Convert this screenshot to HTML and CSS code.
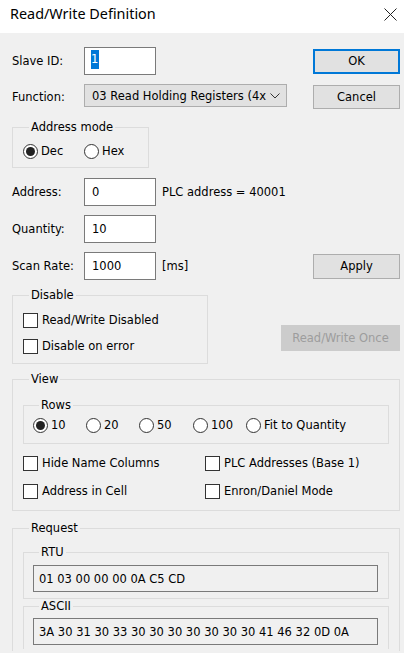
FILE: index.html
```html
<!DOCTYPE html>
<html>
<head>
<meta charset="utf-8">
<title>Read/Write Definition</title>
<link rel="stylesheet" href="styles.css">
</head>
<body>
<div class="titlebar">
  <div class="title">Read/Write Definition</div>
  <svg class="close" width="13" height="13" viewBox="0 0 13 13"><path d="M0.5 0.5 L12.5 12.5 M12.5 0.5 L0.5 12.5" stroke="#222" stroke-width="1" fill="none"/></svg>
</div>
<div class="content">
  <div class="row row-slave">
    <span class="lbl">Slave ID:</span>
    <div class="input"><span class="sel">1</span></div>
    <div class="btn btn-default">OK</div>
  </div>
  <div class="row row-func">
    <span class="lbl">Function:</span>
    <div class="select"><span>03 Read Holding Registers (4x</span><svg width="10" height="6" viewBox="0 0 10 6"><path d="M0.5 0.5 L5 5 L9.5 0.5" stroke="#333" stroke-width="1" fill="none"/></svg></div>
    <div class="btn btn-cancel">Cancel</div>
  </div>
  <fieldset class="group g-addr">
    <legend>Address mode</legend>
    <div class="opts">
      <label class="opt w61"><span class="radio on"></span>Dec</label>
      <label class="opt"><span class="radio"></span>Hex</label>
    </div>
  </fieldset>
  <div class="row row-field first">
    <span class="lbl">Address:</span>
    <div class="input">0</div>
    <span class="note">PLC address = 40001</span>
  </div>
  <div class="row row-field">
    <span class="lbl">Quantity:</span>
    <div class="input">10</div>
  </div>
  <div class="row row-field">
    <span class="lbl">Scan Rate:</span>
    <div class="input">1000</div>
    <span class="note">[ms]</span>
    <div class="btn btn-apply">Apply</div>
  </div>
  <div class="row row-disable">
    <fieldset class="group g-disable">
      <legend>Disable</legend>
      <label class="opt"><span class="check"></span>Read/Write Disabled</label>
      <label class="opt second"><span class="check"></span>Disable on error</label>
    </fieldset>
    <div class="btn btn-disabled">Read/Write Once</div>
  </div>
  <fieldset class="group g-view">
    <legend>View</legend>
    <fieldset class="group g-rows">
      <legend>Rows</legend>
      <div class="opts">
        <label class="opt w53"><span class="radio on"></span>10</label>
        <label class="opt w53"><span class="radio"></span>20</label>
        <label class="opt w54"><span class="radio"></span>50</label>
        <label class="opt w53"><span class="radio"></span>100</label>
        <label class="opt"><span class="radio"></span>Fit to Quantity</label>
      </div>
    </fieldset>
    <div class="checks">
      <label class="opt"><span class="check"></span>Hide Name Columns</label>
      <label class="opt"><span class="check"></span>PLC Addresses (Base 1)</label>
      <label class="opt"><span class="check"></span>Address in Cell</label>
      <label class="opt"><span class="check"></span>Enron/Daniel Mode</label>
    </div>
  </fieldset>
  <fieldset class="group g-request">
    <legend>Request</legend>
    <fieldset class="group g-sub g-rtu">
      <legend>RTU</legend>
      <div class="readout">01 03 00 00 00 0A C5 CD</div>
    </fieldset>
    <fieldset class="group g-sub g-ascii">
      <legend>ASCII</legend>
      <div class="readout">3A 30 31 30 33 30 30 30 30 30 30 30 41 46 32 0D 0A</div>
    </fieldset>
  </fieldset>
</div>
</body>
</html>
```
FILE: styles.css
```css
html, body {
  margin: 0;
  padding: 0;
}
body {
  width: 404px;
  height: 653px;
  overflow: hidden;
  background: #f0f0f0;
  font-family: "DejaVu Sans", sans-serif;
  font-size: 11.5px;
  color: #000;
}
.titlebar {
  height: 33px;
  background: #fff;
  display: flex;
  justify-content: space-between;
  align-items: flex-start;
  padding: 0 7px 0 10px;
  box-sizing: border-box;
}
.title {
  font-family: "Noto Sans", sans-serif;
  font-size: 14.4px;
  line-height: 20px;
  padding-top: 4px;
}
.close {
  margin-top: 8px;
}
.content {
  padding: 14px 4px 0 12px;
}
.row {
  display: flex;
  align-items: center;
}
.lbl {
  width: 72px;
  flex: none;
}
.input {
  box-sizing: border-box;
  width: 72px;
  height: 28px;
  border: 1px solid #7a7a7a;
  background: #fff;
  padding: 0 7px;
  display: flex;
  align-items: center;
  flex: none;
}
.sel {
  background: #0078d7;
  color: #fff;
  padding: 2px 1px 3px 0;
  margin-left: -1px;
  margin-top: -4px;
}
.btn {
  box-sizing: border-box;
  border: 1px solid #adadad;
  background: #e1e1e1;
  display: flex;
  align-items: center;
  justify-content: center;
  flex: none;
  margin-left: auto;
  width: 87px;
}
.btn-default {
  border: 2px solid #0078d7;
  height: 25px;
}
.row-slave {
  height: 28px;
}
.row-func {
  margin-top: 9px;
  height: 25px;
  align-items: flex-start;
}
.row-func .lbl {
  align-self: center;
}
.select {
  box-sizing: border-box;
  width: 203px;
  height: 23px;
  border: 1px solid #adadad;
  background: #e1e1e1;
  display: flex;
  align-items: center;
  justify-content: space-between;
  padding: 0 6px 0 7px;
}
.select svg {
  flex: none;
}
.btn-cancel {
  height: 24px;
  margin-top: 1px;
}
.group {
  margin: 0;
  padding: 0;
  border: 1px solid #dcdcdc;
  min-width: 0;
}
.group legend {
  margin-left: 6px;
  padding: 0 2px;
  line-height: 14px;
  height: 14px;
}
.g-addr {
  margin-top: 11px;
  width: 137px;
  box-sizing: border-box;
  padding: 8px 0 7px 10px;
}
.opts {
  display: flex;
  align-items: center;
}
.opt {
  display: flex;
  align-items: center;
  height: 18px;
}
.w61 { width: 61px; }
.w53 { width: 53px; }
.w54 { width: 54px; }
.radio {
  box-sizing: border-box;
  width: 15px;
  height: 15px;
  border: 1px solid #333;
  border-radius: 50%;
  background: #fff;
  margin-right: 3px;
  display: flex;
  align-items: center;
  justify-content: center;
  flex: none;
}
.radio.on::after {
  content: "";
  width: 9px;
  height: 9px;
  border-radius: 50%;
  background: #222;
}
.check {
  box-sizing: border-box;
  width: 15px;
  height: 15px;
  border: 1px solid #333;
  background: #fff;
  margin-right: 4px;
  flex: none;
}
.row-field {
  margin-top: 9px;
  height: 28px;
}
.row-field.first {
  margin-top: 10px;
}
.note {
  margin-left: 6px;
}
.btn-apply {
  height: 25px;
}
.row-disable {
  margin-top: 8px;
  align-items: flex-start;
}
.g-disable {
  width: 196px;
  box-sizing: border-box;
  padding: 9px 0 8px 10px;
}
.g-disable .second {
  margin-top: 8px;
}
.btn-disabled {
  width: 119px;
  height: 26px;
  margin-top: 37px;
  background: #cccccc;
  border-color: #cccccc;
  color: #9d9d9d;
}
.g-view {
  margin-top: 8px;
  padding: 12px 10px 10px 10px;
}
.g-rows {
  padding: 4px 0 9px 9px;
}
.checks {
  display: grid;
  grid-template-columns: 182px auto;
  row-gap: 10px;
  margin-top: 10px;
}
.g-request {
  margin-top: 10px;
  padding: 10px 10px 2px 10px;
  border-bottom: none;
}
.g-sub {
  padding: 6px 10px 6px 9px;
}
.g-ascii {
  padding-top: 5px;
  padding-bottom: 4px;
  border-bottom: none;
}
.readout {
  box-sizing: border-box;
  height: 27px;
  border: 1px solid #7a7a7a;
  background: #f0f0f0;
  padding: 0 5px;
  display: flex;
  align-items: center;
}
```
